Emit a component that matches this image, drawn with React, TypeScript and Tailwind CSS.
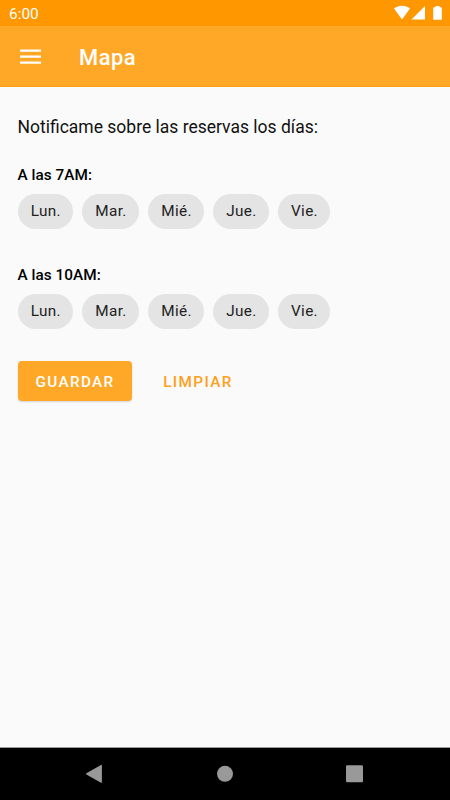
import clsx from 'clsx';

const days = [
  { label: 'Lun.', width: 'w-[55.5px]' },
  { label: 'Mar.', width: 'w-[57px]' },
  { label: 'Mié.', width: 'w-[56px]' },
  { label: 'Jue.', width: 'w-[56px]' },
  { label: 'Vie.', width: 'w-[52px]' },
];

const StatusBar = () => (
  <div className="flex h-[26px] shrink-0 items-center justify-between bg-[#ff9800] pl-[9px] pr-[8px] text-white">
    <span className="pt-[3px] text-[15.4px] leading-none">6:00</span>
    <svg width="50" height="26" viewBox="0 0 50 26" fill="currentColor">
      <path d="M2 8.6C6.6 4.9 13.4 4.9 18 8.6L10 19.5Z" />
      <path d="M33 6v13.5H19.5Z" />
      <path d="M43.5 6h4v1.3h1.4q.9 0 .9.9v10.7q0 .9-.9.9h-6.8q-.9 0-.9-.9V8.2q0-.9.9-.9h1.4Z" />
    </svg>
  </div>
);

const AppBar = () => (
  <header className="flex h-[61px] shrink-0 items-center border-b border-[#ff9f12] bg-[#ffa726] pl-5 text-white">
    <button aria-label="Menú">
      <svg width="21" height="16" viewBox="0 0 21 16" fill="currentColor">
        <path d="M0 1.4h21v2.4H0zM0 7.4h21v2.4H0zM0 13.4h21v2.4H0z" />
      </svg>
    </button>
    <h1 className="ml-[38px] pt-[4px] text-[21.9px] font-medium leading-none tracking-[0.5px]">Mapa</h1>
  </header>
);

const DayGroup = ({ title, className }: { title: string; className?: string }) => (
  <section className={className}>
    <h2 className="h-[18px] text-[15.3px] font-medium leading-[18px] tracking-[0.05px]">{title}</h2>
    <div className="mt-[10px] flex gap-[9px]">
      {days.map((day) => (
        <button
          key={day.label}
          className={clsx(
            'h-[35px] rounded-full bg-[#e4e4e4] pl-px text-[15.3px] leading-[35px] tracking-[0.35px] text-[#222]',
            day.width
          )}
        >
          {day.label}
        </button>
      ))}
    </div>
  </section>
);

const NavBar = () => (
  <nav className="flex h-[53px] shrink-0 items-center border-t border-[#999] bg-black text-[#999]">
    <svg width="450" height="52" viewBox="0 0 450 52" fill="currentColor">
      <path d="M86.4 25.2 101 16.9q.9-.4.9.5v16.8q0 .9-.9.5L86.4 26.4q-.9-.6 0-1.2Z" />
      <circle cx="225" cy="25.8" r="8" />
      <rect x="346" y="17.3" width="17" height="17" rx="1.2" />
    </svg>
  </nav>
);

const App = () => {
  return (
    <div className="flex h-screen w-full flex-col overflow-hidden bg-[#fafafa] font-['Roboto',sans-serif] text-black">
      <StatusBar />
      <AppBar />
      <main className="flex-1 px-[17.5px] pt-[30px]">
        <p className="h-5 whitespace-nowrap text-[17.5px] leading-5 text-[#111]">
          Notificame sobre las reservas los días:
        </p>
        <DayGroup title="A las 7AM:" className="mt-[29px]" />
        <DayGroup title="A las 10AM:" className="mt-[37px]" />
        <div className="mt-8 flex h-10 text-[15.3px] font-medium leading-[42px] tracking-[1.37px]">
          <button className="w-[114px] rounded-[4px] bg-[#ffa726] pl-px text-white shadow-[0_1px_2px_rgba(0,0,0,0.16)]">
            GUARDAR
          </button>
          <button className="ml-[14px] w-[105px] text-[#ff9f1a]">LIMPIAR</button>
        </div>
      </main>
      <NavBar />
    </div>
  );
};

export default App;
